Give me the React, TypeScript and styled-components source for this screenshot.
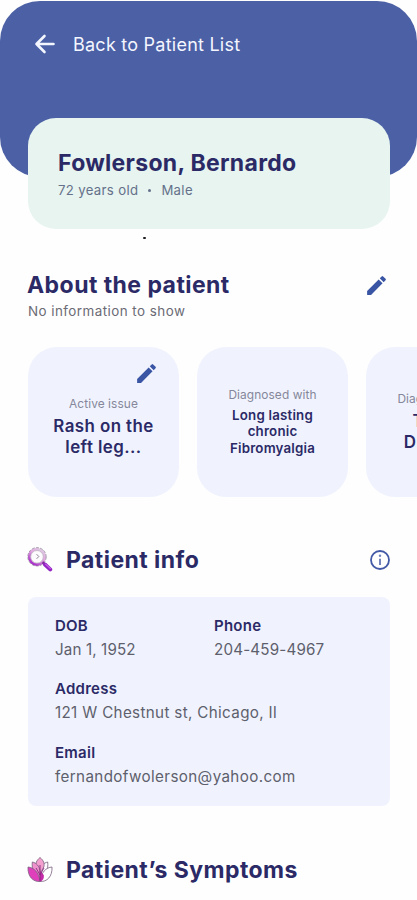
import React from "react";
import styled, { createGlobalStyle } from "styled-components";
import { MdModeEdit } from "react-icons/md";

const navy = "#2b2a66";
const blue = "#3a55a4";
const tint = "#f0f3fe";

const GlobalStyle = createGlobalStyle`
  * { box-sizing: border-box; }
  body {
    margin: 0;
    background: #fefefe;
    font-family: Inter, "Liberation Sans", sans-serif;
    overflow: hidden;
  }
  h1, h2, p, dl, dt, dd { margin: 0; }
`;

const Screen = styled.main`
  width: 417px;
  height: 900px;
  overflow: hidden;
  display: flex;
  flex-direction: column;
`;

const Header = styled.header`
  flex: none;
  height: 176px;
  margin-top: 1px;
  padding: 28px 33px 0;
  border-radius: 40px;
  background: #4b60a5;
`;

const BackLink = styled.a`
  display: flex;
  align-items: center;
  gap: 16px;
  height: 30px;
  color: #f4f6ff;
  font-size: 18px;
  letter-spacing: 0.24px;
  white-space: nowrap;
`;

const PatientCard = styled.section`
  flex: none;
  height: 111px;
  margin: -59px 27px 0 28px;
  padding: 30px 30px 0 30px;
  border-radius: 28px;
  background: #e7f4f0;
`;

const Heading = styled.h2<{ $spacing?: number }>`
  color: ${navy};
  font-size: 23px;
  font-weight: 700;
  line-height: 30px;
  letter-spacing: ${(p) => p.$spacing ?? 0.45}px;
  white-space: nowrap;
`;

const Facts = styled.p`
  display: flex;
  align-items: center;
  color: #65718a;
  font-size: 13.2px;
  line-height: 25px;
  letter-spacing: 0.33px;
`;

const Bullet = styled.span`
  width: 3px;
  height: 3px;
  margin: 0 10px;
  border-radius: 50%;
  background: #65718a;
`;

const Speck = styled.span`
  flex: none;
  width: 3px;
  height: 2px;
  margin: 8px 0 0 143px;
  border-radius: 1px;
  background: #1c1c22;
`;

const SectionHead = styled.div<{ $top: number }>`
  flex: none;
  display: flex;
  align-items: center;
  height: 30px;
  margin: ${(p) => p.$top}px 27px 0;
`;

const Push = styled.span`
  display: flex;
  margin-left: auto;
`;

const EditPush = styled(Push)`
  margin-right: 1px;
`;

const Note = styled.p`
  flex: none;
  margin-left: 28px;
  color: #6b6b75;
  font-size: 13.4px;
  line-height: 23px;
  letter-spacing: 0.46px;
`;

const Cards = styled.div`
  flex: none;
  display: flex;
  gap: 18px;
  margin: 24px 0 0 28px;
  overflow: hidden;
`;

const IssueCard = styled.article<{ $pad: number }>`
  flex: none;
  display: flex;
  flex-direction: column;
  align-items: center;
  width: 151px;
  height: 150px;
  padding-top: ${(p) => p.$pad}px;
  border-radius: 29px;
  background: ${tint};
`;

const CardEdit = styled.span`
  display: flex;
  align-self: flex-end;
  margin: 0 20px 10px 0;
`;

const CardLabel = styled.p`
  color: #85879a;
  font-size: 11.9px;
  line-height: 16px;
  letter-spacing: 0.08px;
`;

const CardValue = styled.p<{ $small?: boolean }>`
  margin-top: ${(p) => (p.$small ? 3.5 : 4.25)}px;
  color: ${navy};
  font-size: ${(p) => (p.$small ? 13.3 : 16.9)}px;
  font-weight: 600;
  line-height: ${(p) => (p.$small ? 16.5 : 21)}px;
  letter-spacing: ${(p) => (p.$small ? 0.2 : 0.42)}px;
  text-align: center;
  white-space: pre-line;
`;

const SectionIcon = styled.span`
  display: flex;
  width: 26px;
  margin-right: 13px;
`;

const InfoPanel = styled.dl`
  flex: none;
  display: grid;
  grid-template-columns: 159px 1fr;
  row-gap: 15.4px;
  align-content: start;
  height: 209px;
  margin: 22px 27px 0 28px;
  padding: 17px 27px 0;
  border-radius: 8px;
  background: ${tint};
`;

const Field = styled.div<{ $wide?: boolean }>`
  grid-column: ${(p) => (p.$wide ? "1 / -1" : "auto")};
`;

const Term = styled.dt`
  color: ${navy};
  font-size: 15px;
  font-weight: 600;
  line-height: 24px;
  letter-spacing: 0.25px;
`;

const Detail = styled.dd<{ $spacing: number }>`
  color: #5e5f6c;
  font-size: 15.2px;
  line-height: 24px;
  letter-spacing: ${(p) => p.$spacing}px;
  white-space: nowrap;
`;

const BackArrow = () => (
  <svg width="24" height="24" viewBox="0 0 24 24" fill="none" stroke="#f4f6ff" strokeWidth="2.6" strokeLinecap="round" strokeLinejoin="round">
    <path d="M20.500 12H3.500M11.500 4 3.500 12l8 8" />
  </svg>
);

const InfoIcon = () => (
  <svg width="20" height="20" viewBox="0 0 20 20">
    <circle cx="10" cy="10" r="9" fill="#fff" stroke="#4259a6" strokeWidth="1.8" />
    <circle cx="10" cy="5.8" r="1.2" fill="#7383bb" />
    <path d="M10 8.8V15" stroke="#7383bb" strokeWidth="2" />
  </svg>
);

const MagnifierIcon = () => (
  <svg width="26" height="26" viewBox="0 0 26 26" fill="none">
    <defs>
      <linearGradient id="rim" x1="1" y1="0" x2="0.3" y2="1">
        <stop offset="0" stopColor="#ddd3e2" />
        <stop offset="0.5" stopColor="#e3a6e2" />
        <stop offset="1" stopColor="#a92fc9" />
      </linearGradient>
    </defs>
    <circle cx="10" cy="9.8" r="7.8" fill="#fcfafd" stroke="url(#rim)" strokeWidth="2.6" />
    <circle cx="10" cy="9.8" r="9.2" stroke="#75697d" strokeWidth="0.6" strokeDasharray="3 1.2" />
    <circle cx="10" cy="9.8" r="6.3" stroke="#a79bad" strokeWidth="0.6" />
    <path d="m9.600 7.200 2.200 2.300-2.200 2.300" stroke="#81758d" strokeWidth="0.9" />
    <path d="m15.500 15.300 3 2.400" stroke="#7c2b93" strokeWidth="2.4" />
    <path d="m18 17.500 5.200 4.900" stroke="#9424c4" strokeWidth="4" strokeLinecap="round" />
    <path d="m18.600 17.200 4.800 4.300" stroke="#c765e5" strokeWidth="1.1" strokeLinecap="round" />
  </svg>
);

const LotusIcon = () => (
  <svg width="26" height="26" viewBox="0 0 26 26" strokeLinejoin="round">
    <g stroke="#79607f" strokeWidth="0.8">
      <path d="M20.700 5c-4 .8-7 4-7.700 9v9c6-4 8.500-11 7.700-18Z" fill="#fdfaff" />
      <path d="M25 10c-6 .5-11 5.500-12 14.500 7 .5 12.500-5 12-14.500Z" fill="#fff" />
      <path d="M13 .5c3.600 3 4.800 6 3.800 9.500L13 17 9.200 10C8.200 6.500 9.400 3.500 13 .5Z" fill="#f3a0cf" />
      <path d="M5.300 5c4 .8 7 4 7.700 9v9C7 19 4.500 12 5.300 5Z" fill="#ee91cd" />
      <path d="M1 10c6 .5 11 5.500 12 14.500C6 25 .5 19.500 1 10Z" fill="#df3fbb" />
    </g>
    <path d="M13 14v10.500c3-.7 4.300-3 3.800-6.500Z" fill="#c42aa8" />
    <path d="M13 8v16M9 11l4 7M17 11l-4 7" fill="none" stroke="#8b267f" strokeWidth="0.9" />
  </svg>
);

export default function App() {
  return (
    <>
      <GlobalStyle />
      <Screen>
        <Header>
          <BackLink>
            <BackArrow />
            Back to Patient List
          </BackLink>
        </Header>
        <PatientCard>
          <Heading as="h1" $spacing={0.3}>Fowlerson, Bernardo</Heading>
          <Facts>
            72 years old
            <Bullet />
            Male
          </Facts>
        </PatientCard>
        <Speck />

        <SectionHead $top={31}>
          <Heading>About the patient</Heading>
          <EditPush>
            <MdModeEdit size={25} color={blue} />
          </EditPush>
        </SectionHead>
        <Note>No information to show</Note>

        <Cards>
          <IssueCard $pad={14}>
            <CardEdit>
              <MdModeEdit size={25} color={blue} />
            </CardEdit>
            <CardLabel>Active issue</CardLabel>
            <CardValue>{"Rash on the\nleft leg..."}</CardValue>
          </IssueCard>
          <IssueCard $pad={40}>
            <CardLabel>Diagnosed with</CardLabel>
            <CardValue $small>{"Long lasting\nchronic\nFibromyalgia"}</CardValue>
          </IssueCard>
          <IssueCard $pad={43.5}>
            <CardLabel>Diagnosed with</CardLabel>
            <CardValue>{"Type 2\nDiabetes"}</CardValue>
          </IssueCard>
        </Cards>

        <SectionHead $top={48}>
          <SectionIcon>
            <MagnifierIcon />
          </SectionIcon>
          <Heading>Patient info</Heading>
          <Push>
            <InfoIcon />
          </Push>
        </SectionHead>
        <InfoPanel>
          <Field>
            <Term>DOB</Term>
            <Detail $spacing={0.12}>Jan 1, 1952</Detail>
          </Field>
          <Field>
            <Term>Phone</Term>
            <Detail $spacing={0.17}>204-459-4967</Detail>
          </Field>
          <Field $wide>
            <Term>Address</Term>
            <Detail $spacing={0.34}>121 W Chestnut st, Chicago, Il</Detail>
          </Field>
          <Field $wide>
            <Term>Email</Term>
            <Detail $spacing={0.37}>fernandofwolerson@yahoo.com</Detail>
          </Field>
        </InfoPanel>

        <SectionHead $top={49}>
          <SectionIcon>
            <LotusIcon />
          </SectionIcon>
          <Heading>Patient’s Symptoms</Heading>
        </SectionHead>
      </Screen>
    </>
  );
}
